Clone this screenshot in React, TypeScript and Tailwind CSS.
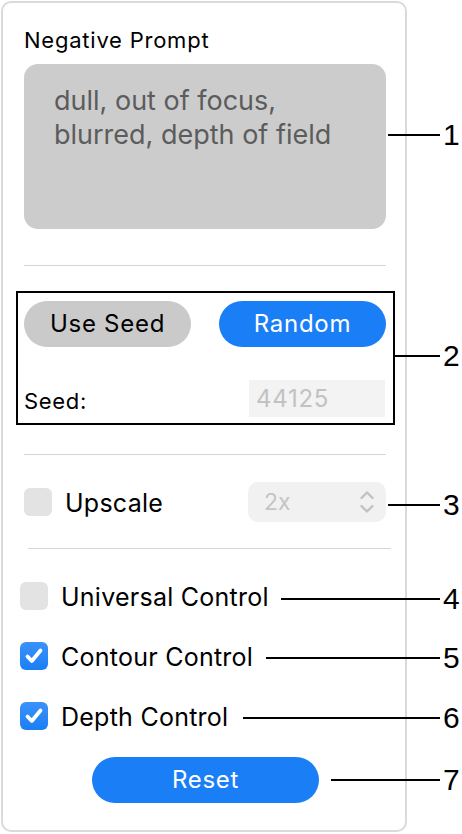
import React from "react";

const Check = () => (
  <svg width="28" height="28" viewBox="0 0 28 28" className="block">
    <path d="M7.5 14.5 L11.8 19 L20.5 8.5" fill="none" stroke="white" strokeWidth="3.8" strokeLinecap="round" strokeLinejoin="round" />
  </svg>
);

const CheckBox = ({ checked }: { checked: boolean }) =>
  checked ? (
    <div className="w-[28px] h-[28px] rounded-[6px] bg-gradient-to-b from-[#3a92fa] to-[#1a7ef5] shrink-0">
      <Check />
    </div>
  ) : (
    <div className="w-[28px] h-[28px] rounded-[6px] bg-[#e3e3e3] shrink-0" />
  );

const callouts = [
  { n: "1", y: 135, x1: 388 },
  { n: "2", y: 356, x1: 395 },
  { n: "3", y: 505, x1: 388 },
  { n: "4", y: 599, x1: 281 },
  { n: "5", y: 658, x1: 266 },
  { n: "6", y: 718, x1: 243 },
  { n: "7", y: 780, x1: 331 },
];

export default function App() {
  return (
    <div className="relative w-[462px] h-[834px] bg-white overflow-hidden font-['Inter','Liberation_Sans',sans-serif] text-black">
      <div className="mt-px ml-px w-[406px] h-[831px] rounded-[10px] border-2 border-[#dadada] flex flex-col">
        <div className="mt-[23px] ml-[21px] h-[28px] leading-[28px] text-[22px] tracking-[0.035em]">Negative Prompt</div>
        <div className="mt-[10px] ml-[21px] w-[362px] h-[165px] rounded-[14px] bg-[#cccccc] pt-[20px] pl-[30px] text-[27px] leading-[34px] text-[#5c5c5c]">
          dull, out of focus,
          <br />
          blurred, depth of field
        </div>
        <div className="mt-[36px] ml-[21px] w-[362px] h-px bg-[#d6d6d6]" />
        <div className="mt-[25px] ml-[13px] w-[379px] h-[134px] border-2 border-black flex flex-col pt-[8px] pl-[6px]">
          <div className="flex gap-[28px]">
            <div className="w-[167px] h-[46px] rounded-full bg-[#cacaca] flex items-center justify-center text-[24px] font-normal tracking-[0.03em]">Use Seed</div>
            <div className="w-[167px] h-[46px] rounded-full bg-[#1a7ff7] flex items-center justify-center text-[24px] font-normal tracking-[0.03em] text-white">Random</div>
          </div>
          <div className="mt-[32px] flex items-center justify-between pr-[8px]">
            <span className="text-[22px] tracking-[0.03em] pt-[6px]">Seed:</span>
            <div className="w-[136px] h-[37px] bg-[#f3f3f3] pl-[7px] flex items-center text-[24px] tracking-[0.03em] text-[#c2c2c2]">44125</div>
          </div>
        </div>
        <div className="mt-[29px] ml-[21px] w-[362px] h-px bg-[#d6d6d6]" />
        <div className="mt-[27px] ml-[21px] w-[362px] h-[40px] flex items-center justify-between">
          <div className="flex items-center">
            <CheckBox checked={false} />
            <span className="ml-[13px] text-[25px] tracking-[0.01em] pt-[3px]">Upscale</span>
          </div>
          <div className="w-[138px] h-[40px] rounded-[10px] bg-[#f1f1f1] flex items-center justify-between pl-[16px] pr-[11px]">
            <span className="text-[23px] text-[#c5c5c5]">2x</span>
            <svg width="16" height="26" viewBox="0 0 16 26">
              <path d="M2.5 9 L8 3.5 L13.5 9" fill="none" stroke="#c2c2c2" strokeWidth="2.4" strokeLinecap="round" strokeLinejoin="round" />
              <path d="M2.5 17 L8 22.5 L13.5 17" fill="none" stroke="#c2c2c2" strokeWidth="2.4" strokeLinecap="round" strokeLinejoin="round" />
            </svg>
          </div>
        </div>
        <div className="mt-[26px] ml-[25px] w-[363px] h-px bg-[#d6d6d6]" />
        <div className="mt-[33px] ml-[17px] h-[28px] flex items-center">
          <CheckBox checked={false} />
          <span className="ml-[13px] text-[25px] tracking-[0.01em] pt-[3px]">Universal Control</span>
        </div>
        <div className="mt-[32px] ml-[17px] h-[28px] flex items-center">
          <CheckBox checked={true} />
          <span className="ml-[13px] text-[25px] tracking-[0.01em] pt-[3px]">Contour Control</span>
        </div>
        <div className="mt-[32px] ml-[17px] h-[28px] flex items-center">
          <CheckBox checked={true} />
          <span className="ml-[13px] text-[25px] tracking-[0.01em] pt-[3px]">Depth Control</span>
        </div>
        <div className="mt-[27px] ml-[89px] w-[227px] h-[46px] rounded-full bg-[#1a7ff7] flex items-center justify-center text-[24px] font-normal tracking-[0.03em] text-white">Reset</div>
      </div>

      {callouts.map((c) => (
        <React.Fragment key={c.n}>
          <div className="absolute h-[2px] bg-black" style={{ top: c.y - 1, left: c.x1, width: 440 - c.x1 }} />
          <div
            className="absolute text-[30px] leading-[30px] font-['Liberation_Sans',Arial,sans-serif]"
            style={{ top: c.y - 15, left: 443 }}
          >
            {c.n}
          </div>
        </React.Fragment>
      ))}
    </div>
  );
}
